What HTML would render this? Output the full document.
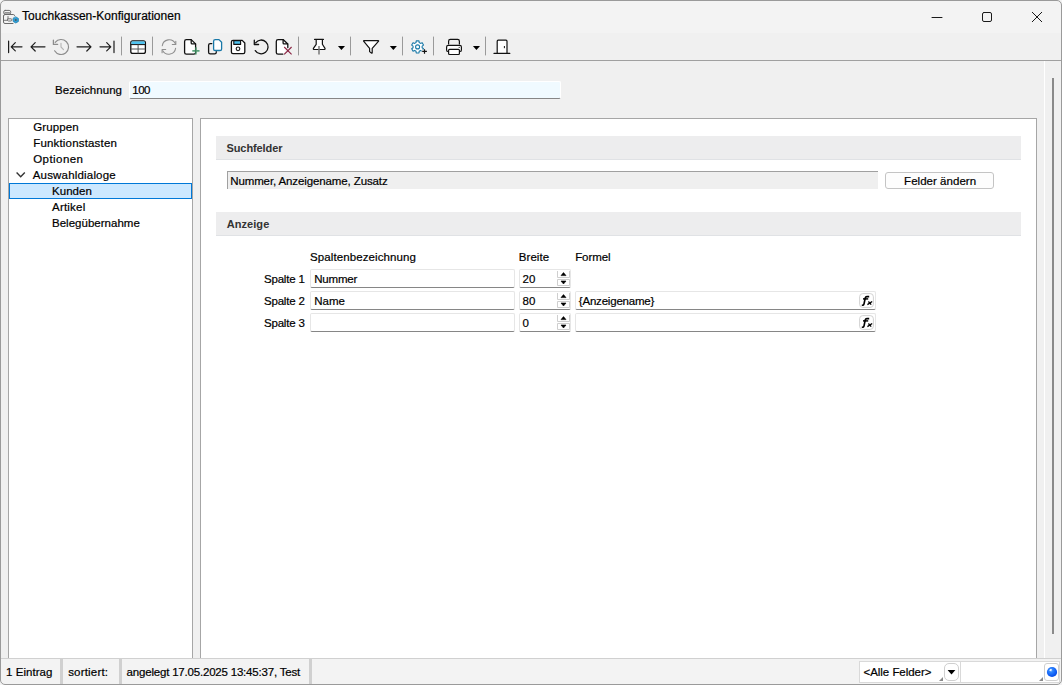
<!DOCTYPE html>
<html><head><meta charset="utf-8"><title>Touchkassen-Konfigurationen</title>
<style>
html,body{margin:0;padding:0;width:1062px;height:685px;overflow:hidden;background:#fff;}
#win{position:relative;width:1062px;height:685px;overflow:hidden;font-family:"Liberation Sans",sans-serif;background:#f0f0f0;}
.a{position:absolute;box-sizing:border-box;}
.t{position:absolute;white-space:pre;line-height:normal;font-family:"Liberation Sans",sans-serif;-webkit-text-stroke:0.2px currentColor;}
svg{position:absolute;overflow:visible;}

</style></head><body>
<div id="win">
<!-- title bar -->
<div class="a" style="left:0;top:0;width:1062px;height:33px;background:#f3f3f3;"></div>
<!-- toolbar line -->
<div class="a" style="left:0;top:60px;width:1062px;height:1px;background:#a0a0a0;"></div>
<!-- bezeichnung input -->
<div class="a" style="left:129px;top:81px;width:432px;height:18px;background:#f0faff;border:1px solid #fff;border-bottom:1px solid #868686;border-radius:2px;"></div>
<!-- tree panel -->
<div class="a" style="left:8px;top:118px;width:185px;height:541px;background:#fff;border:1px solid #a6a6a6;"></div>
<div class="a" style="left:9px;top:183px;width:183px;height:16px;background:#cce8ff;border:1px solid #0078d7;"></div>
<svg style="left:0;top:0" width="1062" height="685"><path d="M16.6 172.6 L20.7 176.7 L24.8 172.6" fill="none" stroke="#333" stroke-width="1.4"/></svg>
<!-- right panel -->
<div class="a" style="left:200px;top:118px;width:837px;height:541px;background:#fff;border:1px solid #a6a6a6;"></div>
<div class="a" style="left:216px;top:136px;width:805px;height:24px;background:#ededee;border-bottom:1px solid #e0e2e5;"></div>
<div class="a" style="left:216px;top:212px;width:805px;height:24px;background:#ededee;border-bottom:1px solid #e0e2e5;"></div>
<div class="a" style="left:227px;top:171px;width:651px;height:18px;background:#efefef;border-top:1px solid #a0a0a0;border-left:1px solid #a0a0a0;"></div>
<div class="a" style="left:885px;top:172px;width:109px;height:17px;background:#fdfdfd;border:1px solid #c4c4c4;border-radius:3px;"></div>
<!-- grid inputs -->
<div class="a" style="left:310px;top:269px;width:205px;height:19px;background:#fff;border:1px solid #e6e6e6;border-bottom:1px solid #868686;border-radius:2px;"></div>
<div class="a" style="left:310px;top:291px;width:205px;height:19px;background:#fff;border:1px solid #e6e6e6;border-bottom:1px solid #868686;border-radius:2px;"></div>
<div class="a" style="left:310px;top:313px;width:205px;height:19px;background:#fff;border:1px solid #e6e6e6;border-bottom:1px solid #868686;border-radius:2px;"></div>
<div class="a" style="left:519px;top:269px;width:52px;height:19px;background:#fff;border:1px solid #e6e6e6;border-bottom:1px solid #868686;border-radius:2px;"></div>
<div class="a" style="left:519px;top:291px;width:52px;height:19px;background:#fff;border:1px solid #e6e6e6;border-bottom:1px solid #868686;border-radius:2px;"></div>
<div class="a" style="left:519px;top:313px;width:52px;height:19px;background:#fff;border:1px solid #e6e6e6;border-bottom:1px solid #868686;border-radius:2px;"></div>
<div class="a" style="left:575px;top:291px;width:301px;height:19px;background:#fff;border:1px solid #e6e6e6;border-bottom:1px solid #868686;border-radius:2px;"></div>
<div class="a" style="left:575px;top:313px;width:301px;height:19px;background:#fff;border:1px solid #e6e6e6;border-bottom:1px solid #868686;border-radius:2px;"></div>
<!-- scrollbar -->
<div class="a" style="left:1044px;top:61px;width:1px;height:598px;background:#fff;"></div>
<div class="a" style="left:1052px;top:78px;width:2px;height:556px;background:#8a8a8a;"></div>
<!-- status bar -->
<div class="a" style="left:0;top:658px;width:1062px;height:27px;background:#f3f3f3;border-top:1px solid #d0d0d0;"></div>
<div class="a" style="left:60px;top:659px;width:3px;height:26px;background:#d0d0d0;"></div>
<div class="a" style="left:119px;top:659px;width:3px;height:26px;background:#d0d0d0;"></div>
<div class="a" style="left:309px;top:659px;width:3px;height:26px;background:#d0d0d0;"></div>
<div class="a" style="left:859px;top:661px;width:102px;height:22px;background:#fff;border:1px solid #d9d9d9;"></div>
<div class="a" style="left:944px;top:663px;width:15px;height:18px;background:#fff;border:1px solid #cfcfcf;border-radius:5px;"></div>
<div class="a" style="left:960px;top:661px;width:100px;height:22px;background:#fff;border:1px solid #d9d9d9;"></div>
<div class="a" style="left:1044px;top:663px;width:15px;height:18px;background:#fff;border:1px solid #cfcfcf;border-radius:3px;"></div>
<svg style="left:0;top:0" width="1062" height="70" viewBox="0 0 1062 70">
<g fill="none" stroke-linecap="round" stroke-linejoin="round">
<!-- window icon -->
<rect x="3.7" y="10.4" width="7" height="3.8" rx="1.5" stroke="#6a6a6a" stroke-width="1"/>
<line x1="5" y1="12.8" x2="9.5" y2="12.8" stroke="#6a6a6a" stroke-width="1"/>
<path d="M3.5 16 Q3.5 14.5 5 14.5 L13.5 14.5 Q14.5 14.5 14.5 15.5 M3.5 16 L3.5 22 Q3.5 23.5 5 23.5 L13 23.5" stroke="#6a6a6a" stroke-width="1"/>
<path d="M7.5 20.3 L3.8 20.3 M8 16.5 L8 19 M7.5 19 Q7 21 8.5 21 L11 21 Q11.8 21 11.8 20 L11.8 19.5 Q11.8 18.8 11 18.8 L8.5 18.8" stroke="#6a6a6a" stroke-width="0.9"/>
<path d="M15.8 16.9 L18.4 18.4 L18.4 21.5 L15.8 23 L13.2 21.5 L13.2 18.4 Z" fill="#2e9fd6" stroke="#1f7fb0" stroke-width="0.8"/>
<circle cx="15.8" cy="20" r="0.9" fill="#555" stroke="none"/>
<!-- window controls -->
<line x1="932" y1="17.5" x2="942" y2="17.5" stroke="#1a1a1a" stroke-width="1"/>
<rect x="982.5" y="12.5" width="9" height="9" rx="1.5" stroke="#1a1a1a" stroke-width="1"/>
<path d="M1032 12 L1042 22 M1042 12 L1032 22" stroke="#1a1a1a" stroke-width="1" stroke-linecap="butt"/>
<!-- 1 |<- -->
<g stroke="#1c1c1c" stroke-width="1.2">
<line x1="8.6" y1="41" x2="8.6" y2="52.6"/>
<path d="M22 46.8 L11.2 46.8 M15.3 42.7 L11.2 46.8 L15.3 50.9"/>
<!-- 2 <- -->
<path d="M45 46.8 L31 46.8 M35.2 42.6 L31 46.8 L35.2 51"/>
<!-- 4 -> -->
<path d="M77 46.8 L91 46.8 M86.8 42.6 L91 46.8 L86.8 51"/>
<!-- 5 ->| -->
<path d="M100 46.8 L110.8 46.8 M106.7 42.7 L110.8 46.8 L106.7 50.9"/>
<line x1="114" y1="41" x2="114" y2="52.6"/>
</g>
<!-- 3 history -->
<path d="M55.2 42.3 A7.5 7.5 0 1 1 54.6 50.8" stroke="#8c8c8c" stroke-width="1.2"/>
<path d="M53.4 40.2 L53.4 44.4 L57.6 44.4" stroke="#8c8c8c" stroke-width="1.3"/>
<path d="M61 43.2 L61 47 L63.5 49.6" stroke="#b4b4b4" stroke-width="1.1"/>
<!-- separators -->
<g stroke="#9a9a9a" stroke-width="1">
<line x1="121.5" y1="37" x2="121.5" y2="55"/>
<line x1="152.5" y1="37" x2="152.5" y2="55"/>
<line x1="298.5" y1="37" x2="298.5" y2="55"/>
<line x1="350.5" y1="37" x2="350.5" y2="55"/>
<line x1="402.5" y1="37" x2="402.5" y2="55"/>
<line x1="433.5" y1="37" x2="433.5" y2="55"/>
<line x1="485.5" y1="37" x2="485.5" y2="55"/>
</g>
<!-- 6 table -->
<rect x="130.8" y="40.8" width="14.6" height="12.6" rx="2" fill="#fff" stroke="#111" stroke-width="1.3"/>
<rect x="131.5" y="41.4" width="13.2" height="2.8" fill="#4fc3f0" stroke="none"/>
<line x1="131" y1="44.6" x2="145.2" y2="44.6" stroke="#111" stroke-width="1"/>
<line x1="138.1" y1="45" x2="138.1" y2="53" stroke="#555" stroke-width="1"/>
<line x1="131.5" y1="49" x2="144.8" y2="49" stroke="#555" stroke-width="1"/>
<!-- 7 refresh -->
<g stroke="#8f8f8f" stroke-width="1.1">
<path d="M162.3 45.8 A6.9 6.9 0 0 1 175.3 43.6"/>
<path d="M175.8 41.2 L175.8 44.5 L172.3 44.5"/>
<path d="M175.6 48.2 A6.9 6.9 0 0 1 162.8 50.8"/>
<path d="M162.1 52.7 L162.1 49.5 L165.7 49.5"/>
</g>
<!-- 8 new doc -->
<path d="M191.2 39.6 L186.4 39.6 Q184.6 39.6 184.6 41.4 L184.6 52.4 Q184.6 54.2 186.4 54.2 L193.8 54.2 Q195.6 54.2 195.6 52.4 L195.6 43.9 Z" fill="#fff" stroke="#111" stroke-width="1.3"/>
<path d="M191.2 39.8 L191.2 43 Q191.2 43.9 192.1 43.9 L195.5 43.9" stroke="#111" stroke-width="1.3"/>
<path d="M192.3 50.9 L199.5 50.9 M195.9 47.3 L195.9 54.6" stroke="#3f9364" stroke-width="1.6" stroke-linecap="butt" opacity="0.85"/>
<!-- 9 copy -->
<path d="M211.8 43.6 L210.2 43.6 Q208.6 43.6 208.6 45.2 L208.6 52.3 Q208.6 53.9 210.2 53.9 L214.6 53.9 Q216.3 53.9 216.3 52.2 L216.3 51.6" stroke="#111" stroke-width="1.3"/>
<path d="M219 39.6 L215.2 39.6 Q213.6 39.6 213.6 41.2 L213.6 48.9 Q213.6 50.5 215.2 50.5 L220 50.5 Q221.6 50.5 221.6 48.9 L221.6 42.2 Z" fill="#fff" stroke="#1878a8" stroke-width="1.3"/>
<!-- 10 save -->
<path d="M242.2 40.4 L233 40.4 Q231.4 40.4 231.4 42 L231.4 52.1 Q231.4 53.7 233 53.7 L243.2 53.7 Q244.8 53.7 244.8 52.1 L244.8 43 Z" fill="#fff" stroke="#111" stroke-width="1.3"/>
<rect x="233.8" y="40.6" width="6.8" height="3.8" fill="#4fc3f0" stroke="#111" stroke-width="1.1"/>
<circle cx="238" cy="48.8" r="1.8" stroke="#222" stroke-width="1.2"/>
<!-- 11 undo -->
<path d="M255.6 42.8 A6.9 6.9 0 1 1 255.3 50.6" stroke="#111" stroke-width="1.3"/>
<path d="M254.3 40.2 L254.3 44.5 L258.6 44.5" stroke="#111" stroke-width="1.3"/>
<!-- 12 delete doc -->
<path d="M287.8 47.5 L287.8 43.9 L283.1 39.6 L278.1 39.6 Q276.3 39.6 276.3 41.4 L276.3 52.4 Q276.3 54.2 278.1 54.2 L282.8 54.2" fill="#fff" stroke="#111" stroke-width="1.3"/>
<path d="M283.1 39.8 L283.1 43 Q283.1 43.9 284 43.9 L287.6 43.9" stroke="#111" stroke-width="1.3"/>
<path d="M284.2 47 L291.6 54.4 M291.6 47 L284.2 54.4" stroke="#8a2342" stroke-width="1.1" stroke-linecap="butt"/>
<!-- 13 pin -->
<path d="M316.2 40 L316.2 44.3 L313.4 48.4 Q313 49.5 314.2 49.5 L324.2 49.5 Q325.4 49.5 325 48.4 L322.4 44.3 L322.4 40" fill="#fff" stroke="#111" stroke-width="1.2"/>
<line x1="314.6" y1="39.4" x2="323.4" y2="39.4" stroke="#111" stroke-width="1.3"/>
<line x1="319" y1="46" x2="319" y2="54.6" stroke="#777" stroke-width="1.5" stroke-linecap="butt"/>
<!-- 14 filter -->
<path d="M364 40.6 L378.2 40.6 Q379 40.6 378.4 41.4 L372.2 48.3 L372.2 52.6 Q372.2 53.6 371.4 53 L369.6 51.6 L369.6 48.3 L363.8 41.4 Q363.2 40.6 364 40.6 Z" fill="#fff" stroke="#111" stroke-width="1.2"/>
<!-- 15 gear -->
<path d="M416.03 42.58 L416.21 40.86 L418.99 40.86 L419.17 42.58 L420.56 43.38 L422.13 42.67 L423.53 45.09 L422.13 46.10 L422.13 47.70 L423.53 48.71 L422.13 51.13 L420.56 50.42 L419.17 51.22 L418.99 52.94 L416.21 52.94 L416.03 51.22 L414.64 50.42 L413.07 51.13 L411.67 48.71 L413.07 47.70 L413.07 46.10 L411.67 45.09 L413.07 42.67 L414.64 43.38 Z" fill="#fff" stroke="#1a7aa8" stroke-width="1.1"/>
<circle cx="417.6" cy="46.9" r="2" stroke="#1a7aa8" stroke-width="1.1"/>
<rect x="421.7" y="49.6" width="6" height="5.4" fill="#f0f0f0" stroke="none"/>
<path d="M422.2 51.4 L426.9 51.4 M424.5 49.2 L424.5 53.7" stroke="#111" stroke-width="1.2" stroke-linecap="butt"/>
<!-- 16 printer -->
<path d="M448.6 44 L448.6 41.2 Q448.6 39.4 450.4 39.4 L457.6 39.4 Q459.4 39.4 459.4 41.2 L459.4 44" stroke="#111" stroke-width="1.2"/>
<rect x="446.6" y="45.3" width="14.8" height="6.2" rx="1.6" fill="#fff" stroke="#111" stroke-width="1.2"/>
<rect x="448.6" y="49.3" width="10.8" height="5.2" rx="1" fill="#fff" stroke="#111" stroke-width="1.2"/>
<circle cx="459.2" cy="47.3" r="0.6" fill="#111" stroke="none"/>
<!-- 17 door -->
<path d="M497.2 53.3 L497.2 41.2 Q497.2 40.2 498.2 40.2 L506 40.2 Q507 40.2 507 41.2 L507 53.3" fill="#fff" stroke="#111" stroke-width="1.2"/>
<line x1="494" y1="53.4" x2="509.8" y2="53.4" stroke="#111" stroke-width="1.2"/>
<line x1="504.4" y1="46.4" x2="504.4" y2="47.8" stroke="#111" stroke-width="1"/>
</g>
<!-- dropdown triangles -->
<g fill="#000">
<path d="M337.9 46 L345 46 L341.45 50 Z"/>
<path d="M389.8 46 L396.9 46 L393.35 50 Z"/>
<path d="M472.9 46 L480 46 L476.45 50 Z"/>
</g>
</svg>

<svg style="left:0;top:0" width="1062" height="685" viewBox="0 0 1062 685">
<!-- spin buttons -->
<g>
<path d="M557.5 271 L557.5 277.5 L569.5 277.5 L569.5 271" fill="#fff" stroke="#cfcfcf" stroke-width="1"/>
<path d="M557.5 279.5 L557.5 285.5 L569.5 285.5 L569.5 279.5 Z" fill="#fff" stroke="#cfcfcf" stroke-width="1"/>
<path d="M561 275.6 L563.5 272.6 L566 275.6 Z" fill="#000" stroke="#000" stroke-width="0.6" stroke-linejoin="round"/>
<path d="M561 281 L563.5 284 L566 281 Z" fill="#000" stroke="#000" stroke-width="0.6" stroke-linejoin="round"/>
</g>
<g transform="translate(0,22)">
<path d="M557.5 271 L557.5 277.5 L569.5 277.5 L569.5 271" fill="#fff" stroke="#cfcfcf" stroke-width="1"/>
<path d="M557.5 279.5 L557.5 285.5 L569.5 285.5 L569.5 279.5 Z" fill="#fff" stroke="#cfcfcf" stroke-width="1"/>
<path d="M561 275.6 L563.5 272.6 L566 275.6 Z" fill="#000" stroke="#000" stroke-width="0.6" stroke-linejoin="round"/>
<path d="M561 281 L563.5 284 L566 281 Z" fill="#000" stroke="#000" stroke-width="0.6" stroke-linejoin="round"/>
</g>
<g transform="translate(0,44)">
<path d="M557.5 271 L557.5 277.5 L569.5 277.5 L569.5 271" fill="#fff" stroke="#cfcfcf" stroke-width="1"/>
<path d="M557.5 279.5 L557.5 285.5 L569.5 285.5 L569.5 279.5 Z" fill="#fff" stroke="#cfcfcf" stroke-width="1"/>
<path d="M561 275.6 L563.5 272.6 L566 275.6 Z" fill="#000" stroke="#000" stroke-width="0.6" stroke-linejoin="round"/>
<path d="M561 281 L563.5 284 L566 281 Z" fill="#000" stroke="#000" stroke-width="0.6" stroke-linejoin="round"/>
</g>
<!-- fx buttons -->
<g id="fx1">
<rect x="859.6" y="293.6" width="13.8" height="13.8" rx="3.2" fill="#fff" stroke="#d2d2d2" stroke-width="1"/>
<path d="M869.2 296.6 L866.8 296.6 Q865.6 296.6 865.3 297.8 L864 304 Q863.7 305.3 862.4 305.3 L861.8 305.3" fill="none" stroke="#000" stroke-width="1.6" stroke-linecap="butt"/>
<path d="M863 298.9 L868.2 298.9" stroke="#000" stroke-width="1.5"/>
<path d="M868.4 301.5 L871.2 304.6 M872.2 301.5 L867.4 304.6" stroke="#000" stroke-width="1.3"/>
</g>
<g transform="translate(0,22)">
<rect x="859.6" y="293.6" width="13.8" height="13.8" rx="3.2" fill="#fff" stroke="#d2d2d2" stroke-width="1"/>
<path d="M869.2 296.6 L866.8 296.6 Q865.6 296.6 865.3 297.8 L864 304 Q863.7 305.3 862.4 305.3 L861.8 305.3" fill="none" stroke="#000" stroke-width="1.6" stroke-linecap="butt"/>
<path d="M863 298.9 L868.2 298.9" stroke="#000" stroke-width="1.5"/>
<path d="M868.4 301.5 L871.2 304.6 M872.2 301.5 L867.4 304.6" stroke="#000" stroke-width="1.3"/>
</g>
<!-- status combo dropdown triangle -->
<path d="M947.6 670 L955.4 670 L951.5 674.4 Z" fill="#000"/>
<!-- resize grips -->
<path d="M939 681 L943 677 L943 681 Z" fill="#8a8a8a"/>
<path d="M1039 681 L1043 677 L1043 681 Z" fill="#8a8a8a"/>
<!-- blue ball -->
<defs><radialGradient id="ball" cx="0.4" cy="0.35" r="0.7"><stop offset="0" stop-color="#9cc8ff"/><stop offset="0.25" stop-color="#2f86ff"/><stop offset="0.8" stop-color="#0a55f0"/><stop offset="1" stop-color="#0746d0"/></radialGradient></defs>
<circle cx="1052" cy="672" r="5.1" fill="url(#ball)"/>
<ellipse cx="1050.6" cy="669.9" rx="1.3" ry="0.9" fill="#fff" opacity="0.9" transform="rotate(-35 1050.6 669.9)"/>
</svg>

<!-- window border -->
<div class="a" style="left:0;top:0;width:1062px;height:685px;border:1px solid #9a9a9a;border-radius:5px 5px 5px 5px;pointer-events:none;"></div>

<div class="t" style="left:22.10px;top:9.00px;font-size:12px;font-weight:normal;color:#000;letter-spacing:0.015px;">Touchkassen-Konfigurationen</div><div class="t" style="left:55.00px;top:83.50px;font-size:11.5px;font-weight:normal;color:#000;letter-spacing:0.050px;">Bezeichnung</div><div class="t" style="left:132.20px;top:84.00px;font-size:11.5px;font-weight:normal;color:#000;letter-spacing:-0.444px;">100</div><div class="t" style="left:33.20px;top:120.60px;font-size:11.5px;font-weight:normal;color:#000;letter-spacing:0.122px;">Gruppen</div><div class="t" style="left:33.20px;top:136.50px;font-size:11.5px;font-weight:normal;color:#000;letter-spacing:0.179px;">Funktionstasten</div><div class="t" style="left:33.20px;top:152.50px;font-size:11.5px;font-weight:normal;color:#000;letter-spacing:0.445px;">Optionen</div><div class="t" style="left:32.70px;top:168.70px;font-size:11.5px;font-weight:normal;color:#000;letter-spacing:0.188px;">Auswahldialoge</div><div class="t" style="left:52.00px;top:184.60px;font-size:11.5px;font-weight:normal;color:#000;letter-spacing:0.049px;">Kunden</div><div class="t" style="left:52.00px;top:200.70px;font-size:11.5px;font-weight:normal;color:#000;letter-spacing:0.208px;">Artikel</div><div class="t" style="left:52.00px;top:216.60px;font-size:11.5px;font-weight:normal;color:#000;letter-spacing:0.016px;">Belegübernahme</div><div class="t" style="left:226.50px;top:142.00px;font-size:11px;font-weight:bold;color:#333;letter-spacing:-0.095px;-webkit-text-stroke:0;">Suchfelder</div><div class="t" style="left:230.20px;top:175.00px;font-size:11.5px;font-weight:normal;color:#000;letter-spacing:-0.113px;">Nummer, Anzeigename, Zusatz</div><div class="t" style="left:904.10px;top:174.80px;font-size:11.5px;font-weight:normal;color:#000;letter-spacing:0.033px;">Felder ändern</div><div class="t" style="left:226.70px;top:217.80px;font-size:11px;font-weight:bold;color:#333;letter-spacing:0.069px;-webkit-text-stroke:0;">Anzeige</div><div class="t" style="left:310.00px;top:250.90px;font-size:11.5px;font-weight:normal;color:#000;letter-spacing:0.104px;">Spaltenbezeichnung</div><div class="t" style="left:518.80px;top:250.90px;font-size:11.5px;font-weight:normal;color:#000;letter-spacing:0.051px;">Breite</div><div class="t" style="left:575.20px;top:250.90px;font-size:11.5px;font-weight:normal;color:#000;letter-spacing:-0.096px;">Formel</div><div class="t" style="left:264.00px;top:273.00px;font-size:11.5px;font-weight:normal;color:#000;letter-spacing:-0.200px;">Spalte 1</div><div class="t" style="left:264.00px;top:295.00px;font-size:11.5px;font-weight:normal;color:#000;letter-spacing:-0.200px;">Spalte 2</div><div class="t" style="left:264.00px;top:317.00px;font-size:11.5px;font-weight:normal;color:#000;letter-spacing:-0.200px;">Spalte 3</div><div class="t" style="left:314.20px;top:273.00px;font-size:11.5px;font-weight:normal;color:#000;letter-spacing:-0.179px;">Nummer</div><div class="t" style="left:314.20px;top:295.00px;font-size:11.5px;font-weight:normal;color:#000;letter-spacing:-0.001px;">Name</div><div class="t" style="left:522.50px;top:273.00px;font-size:11.5px;font-weight:normal;color:#000;letter-spacing:-0.001px;">20</div><div class="t" style="left:522.50px;top:295.00px;font-size:11.5px;font-weight:normal;color:#000;letter-spacing:-0.001px;">80</div><div class="t" style="left:522.50px;top:317.00px;font-size:11.5px;font-weight:normal;color:#000;letter-spacing:-0.001px;">0</div><div class="t" style="left:578.80px;top:294.50px;font-size:11.5px;font-weight:normal;color:#000;letter-spacing:-0.201px;">{Anzeigename}</div><div class="t" style="left:6.10px;top:665.80px;font-size:11.5px;font-weight:normal;color:#000;letter-spacing:0.021px;">1 Eintrag</div><div class="t" style="left:68.20px;top:665.80px;font-size:11.5px;font-weight:normal;color:#000;letter-spacing:0.182px;">sortiert:</div><div class="t" style="left:126.60px;top:665.80px;font-size:11.5px;font-weight:normal;color:#000;letter-spacing:-0.197px;">angelegt 17.05.2025 13:45:37, Test</div><div class="t" style="left:863.50px;top:665.80px;font-size:11.5px;font-weight:normal;color:#000;letter-spacing:-0.034px;">&lt;Alle Felder&gt;</div>
</div>
</body></html>
